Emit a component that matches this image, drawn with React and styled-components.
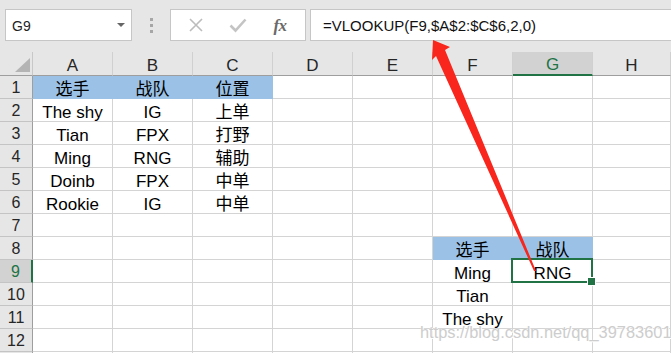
import React from 'react'
import styled, { createGlobalStyle, css } from 'styled-components'

const GREEN = '#217346'
const BLUE = '#9bc2e6'

const GlobalStyle = createGlobalStyle`
  * { box-sizing: border-box; }
  body {
    margin: 0;
    background: #fff;
    overflow: hidden;
  }
`

const Window = styled.div`
  position: relative;
  width: 671px;
  height: 353px;
  overflow: hidden;
  background: #fff;
  font-family: "Liberation Sans", "Noto Sans CJK SC", sans-serif;
`

const TopBar = styled.div`
  height: 52px;
  background: #e6e6e6;
  display: flex;
  align-items: flex-start;
  padding: 9px 0 0 5px;
`

const NameBox = styled.div`
  width: 127px;
  height: 32px;
  background: #fff;
  border: 1px solid #c6c6c6;
  display: flex;
  align-items: center;
  justify-content: space-between;
  padding: 2px 6px 0 6px;
  font-size: 14px;
  color: #222;
`

const DropArrow = styled.span`
  width: 0;
  height: 0;
  border-left: 4px solid transparent;
  border-right: 4px solid transparent;
  border-top: 4px solid #666;
  margin-top: -2px;
`

const Grip = styled.div`
  width: 38px;
  height: 32px;
  display: flex;
  flex-direction: column;
  align-items: center;
  justify-content: center;
  gap: 3px;
  padding-top: 1px;

  span {
    width: 3px;
    height: 3px;
    background: #a6a6a6;
  }
`

const ButtonBox = styled.div`
  width: 136px;
  height: 32px;
  background: #fff;
  border: 1px solid #c6c6c6;
  display: flex;
  align-items: center;
  justify-content: space-around;
  padding: 0 4px;
`

const IconBtn = styled.div`
  width: 28px;
  height: 28px;
  display: flex;
  align-items: center;
  justify-content: center;
`

const Fx = styled.span`
  font-family: "Liberation Serif", serif;
  font-style: italic;
  font-weight: bold;
  font-size: 17px;
  color: #6a6a6a;
  letter-spacing: -0.5px;
  padding-top: 2px;
`

const FormulaBox = styled.div`
  flex: 1;
  height: 32px;
  margin-left: 4px;
  margin-right: -2px;
  background: #fff;
  border: 1px solid #c6c6c6;
  display: flex;
  align-items: center;
  padding: 2px 0 0 12px;
  font-size: 15px;
  line-height: 18px;
  color: #111;
`

const Sheet = styled.div`
  display: grid;
  grid-template-columns: 33px repeat(7, 80px) 1fr;
  grid-template-rows: 24px repeat(13, 23px);
`

const Corner = styled.div`
  position: relative;
  background: #e6e6e6;
  border-right: 1px solid #c8c8c8;
  border-bottom: 1px solid #9e9e9e;

  &::after {
    content: '';
    position: absolute;
    right: 2px;
    bottom: 3px;
    width: 0;
    height: 0;
    border-left: 15px solid transparent;
    border-bottom: 14px solid #b4b4b4;
  }
`

const ColHead = styled.div`
  background: ${p => (p.$active ? '#d2d2d2' : '#e6e6e6')};
  border-right: 1px solid #d0d0d0;
  border-bottom: ${p => (p.$active ? `2px solid ${GREEN}` : '1px solid #9e9e9e')};
  color: ${p => (p.$active ? GREEN : '#262626')};
  display: flex;
  justify-content: center;
  align-items: center;
  padding-top: 3px;
  font-size: 17px;
  line-height: 19px;
`

const RowHead = styled.div`
  background: ${p => (p.$active ? '#d2d2d2' : '#e6e6e6')};
  border-right: ${p => (p.$active ? `2px solid ${GREEN}` : '1px solid #9e9e9e')};
  border-bottom: 1px solid #c4c4c4;
  color: ${p => (p.$active ? GREEN : '#262626')};
  display: flex;
  justify-content: center;
  align-items: center;
  padding-top: 1px;
  font-size: 16px;
  line-height: 19px;
`

const Cell = styled.div`
  background: ${p => p.$fill || '#fff'};
  border-right: 1px solid ${p => p.$fill || '#d4d4d4'};
  border-bottom: 1px solid ${p => p.$fill || '#d4d4d4'};
  display: flex;
  justify-content: center;
  align-items: center;
  padding-top: 4px;
  font-size: 17px;
  line-height: 19px;
  color: #000;
  white-space: nowrap;

  ${p =>
    p.$selected &&
    css`
      position: relative;
      z-index: 2;
      &::after {
        content: '';
        position: absolute;
        top: -2px;
        left: -2px;
        right: -1px;
        bottom: -1px;
        border: 2px solid ${GREEN};
      }
      &::before {
        content: '';
        position: absolute;
        right: -4px;
        bottom: -4px;
        width: 7px;
        height: 7px;
        background: ${GREEN};
        border: 1px solid #fff;
        z-index: 3;
      }
    `}
`

const Arrow = styled.svg`
  position: absolute;
  left: 0;
  top: 0;
  pointer-events: none;
  z-index: 5;
`

const Watermark = styled.div`
  position: absolute;
  left: 420px;
  top: 323px;
  font-size: 16.4px;
  color: #cdcdcd;
  text-shadow: 0 0 1px #fff, 1px 1px 0 #fff;
  pointer-events: none;
  z-index: 6;
  white-space: nowrap;
`

const COLS = ['A', 'B', 'C', 'D', 'E', 'F', 'G', 'H']

const data = {
  1: { A: '选手', B: '战队', C: '位置' },
  2: { A: 'The shy', B: 'IG', C: '上单' },
  3: { A: 'Tian', B: 'FPX', C: '打野' },
  4: { A: 'Ming', B: 'RNG', C: '辅助' },
  5: { A: 'Doinb', B: 'FPX', C: '中单' },
  6: { A: 'Rookie', B: 'IG', C: '中单' },
  8: { F: '选手', G: '战队' },
  9: { F: 'Ming', G: 'RNG' },
  10: { F: 'Tian' },
  11: { F: 'The shy' },
}

const filled = { 1: ['A', 'B', 'C'], 8: ['F', 'G'] }

export default function App() {
  const rows = Array.from({ length: 13 }, (_, i) => i + 1)

  return (
    <Window>
      <GlobalStyle />
      <TopBar>
        <NameBox>
          <span>G9</span>
          <DropArrow />
        </NameBox>
        <Grip>
          <span />
          <span />
          <span />
        </Grip>
        <ButtonBox>
          <IconBtn>
            <svg width="16" height="16" viewBox="0 0 16 16">
              <path d="M2 2 L14 14 M14 2 L2 14" stroke="#bcbcbc" strokeWidth="1.6" fill="none" />
            </svg>
          </IconBtn>
          <IconBtn>
            <svg width="18" height="16" viewBox="0 0 18 16">
              <path d="M1.5 8.5 L6.5 13.5 L16.5 2.5" stroke="#c4c4c4" strokeWidth="2.6" fill="none" />
            </svg>
          </IconBtn>
          <IconBtn>
            <Fx>fx</Fx>
          </IconBtn>
        </ButtonBox>
        <FormulaBox>=VLOOKUP(F9,$A$2:$C$6,2,0)</FormulaBox>
      </TopBar>

      <Sheet>
        <Corner />
        {COLS.map(c => (
          <ColHead key={c} $active={c === 'G'}>
            {c}
          </ColHead>
        ))}
        {rows.map(r => (
          <React.Fragment key={r}>
            <RowHead $active={r === 9}>{r}</RowHead>
            {COLS.map(c => (
              <Cell
                key={c}
                $fill={filled[r] && filled[r].includes(c) ? BLUE : null}
                $selected={r === 9 && c === 'G'}
              >
                {data[r] && data[r][c]}
              </Cell>
            ))}
          </React.Fragment>
        ))}
      </Sheet>

      <Arrow width="671" height="353" viewBox="0 0 671 353">
        <polygon
          points="433,40 450,47 445,50 536,271 534,271 436,56 432,60"
          fill="#f8261c"
        />
      </Arrow>

      <Watermark>https://blog.csdn.net/qq_39783601</Watermark>
    </Window>
  )
}
